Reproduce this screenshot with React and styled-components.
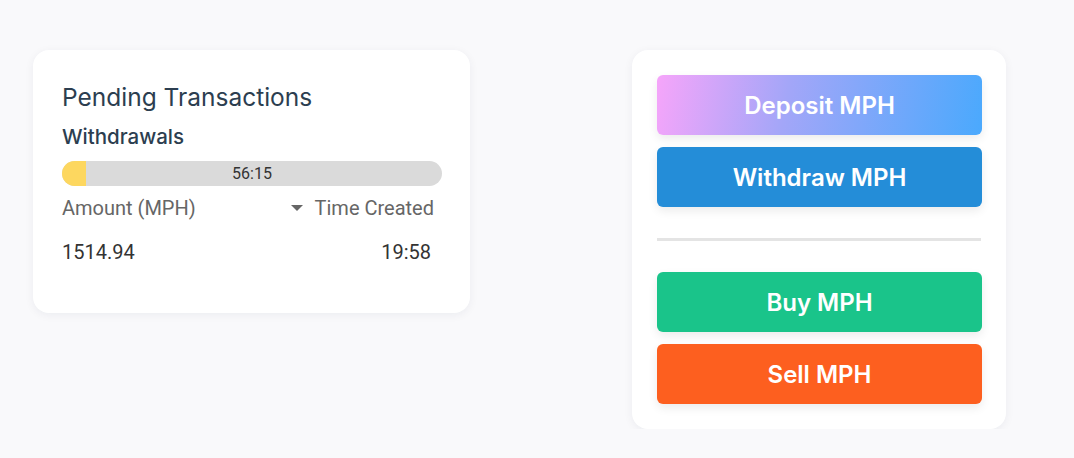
import React from 'react';
import styled, { createGlobalStyle } from 'styled-components';

const GlobalStyle = createGlobalStyle`
  body {
    margin: 0;
    background: #f9f9fb;
    font-family: Inter, "Noto Sans", sans-serif;
  }
`;

const Page = styled.div`
  display: flex;
  align-items: flex-start;
  gap: 162px;
  padding: 50px 0 0 33px;
`;

const Card = styled.div`
  background: #fff;
  border-radius: 16px;
  box-shadow: 0 2px 10px rgba(20, 30, 60, 0.06);
  box-sizing: border-box;
`;

const PendingCard = styled(Card)`
  width: 437px;
  height: 263px;
  padding: 32px 29px 0 29px;
`;

const Title = styled.h2`
  margin: 0;
  font-size: 24.5px;
  font-weight: 400;
  color: #2c3e50;
  line-height: 30px;
`;

const Subtitle = styled.h3`
  margin: 13px 0 0;
  font-size: 20.5px;
  font-weight: 500;
  color: #2c3e50;
  line-height: 24px;
`;

const Bar = styled.div`
  position: relative;
  margin-top: 12px;
  width: 380px;
  height: 25px;
  border-radius: 13px;
  background: #dadada;
  overflow: hidden;
  display: flex;
  align-items: center;
  justify-content: center;
  font-family: Roboto, sans-serif;
  font-size: 16px;
  color: #333;
`;

const Fill = styled.div`
  position: absolute;
  left: 0;
  top: 0;
  bottom: 0;
  background: #fdd75f;
`;

const BarLabel = styled.span`
  position: relative;
`;

const Row = styled.div`
  display: flex;
  justify-content: space-between;
  align-items: center;
  width: 372px;
  font-family: Roboto, sans-serif;
  font-size: 20px;
  color: ${p => (p.$head ? '#666' : '#333')};
  margin-top: ${p => p.$mt}px;
  line-height: 24px;
`;

const SortHead = styled.span`
  display: flex;
  align-items: center;
  gap: 12px;
`;

const Caret = styled.span`
  width: 0;
  height: 0;
  border-left: 6px solid transparent;
  border-right: 6px solid transparent;
  border-top: 6px solid #666;
`;

const ActionsCard = styled(Card)`
  width: 374px;
  padding: 25px;
  display: flex;
  flex-direction: column;
  gap: 12px;
`;

const ActionButton = styled.button`
  width: 325px;
  height: 60px;
  border: none;
  border-radius: 6px;
  background: ${p => p.$bg};
  color: #fff;
  font-family: Inter, "Noto Sans", sans-serif;
  font-size: 24px;
  font-weight: 600;
  box-shadow: 0 4px 10px rgba(0, 0, 0, 0.08);
  cursor: pointer;
`;

const Divider = styled.hr`
  border: none;
  height: 3px;
  background: #e4e4e4;
  margin: 19px 0 19px;
`;

export default function App() {
  return (
    <>
      <GlobalStyle />
      <Page>
        <PendingCard>
          <Title>Pending Transactions</Title>
          <Subtitle>Withdrawals</Subtitle>
          <Bar>
            <Fill style={{ width: '6.3%' }} />
            <BarLabel>56:15</BarLabel>
          </Bar>
          <Row $head $mt={10}>
            <span>Amount (MPH)</span>
            <SortHead>
              <Caret />
              Time Created
            </SortHead>
          </Row>
          <Row $mt={20} style={{ width: 369 }}>
            <span>1514.94</span>
            <span>19:58</span>
          </Row>
        </PendingCard>
        <ActionsCard>
          <ActionButton $bg="linear-gradient(100deg, #f6a5fa 0%, #a3a6f8 40%, #4aa9fd 100%)">
            Deposit MPH
          </ActionButton>
          <ActionButton $bg="#248dd8">Withdraw MPH</ActionButton>
          <Divider />
          <ActionButton $bg="#1ac48a">Buy MPH</ActionButton>
          <ActionButton $bg="#fd5f1f">Sell MPH</ActionButton>
        </ActionsCard>
      </Page>
    </>
  );
}
